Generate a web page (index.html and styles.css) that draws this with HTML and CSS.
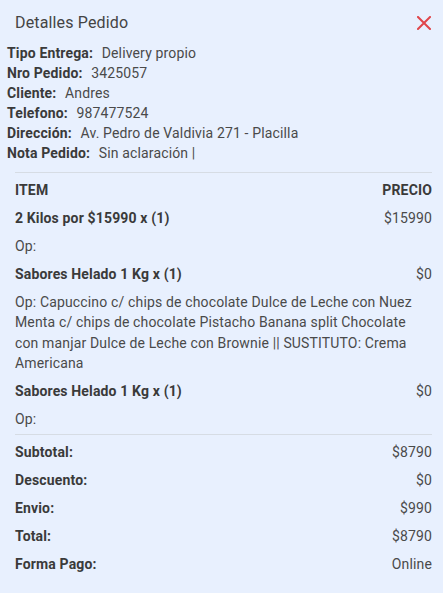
FILE: index.html
```html
<!DOCTYPE html>
<html lang="es">
<head>
<meta charset="utf-8">
<title>Detalles Pedido</title>
<link rel="stylesheet" href="styles.css">
</head>
<body>
<div class="panel">
  <div class="header">
    <h1 class="title">Detalles Pedido</h1>
    <button class="close" aria-label="Cerrar">
      <svg width="14" height="14" viewBox="0 0 14 14"><path d="M1 1 L13 13 M13 1 L1 13" stroke="#e0464b" stroke-width="2" fill="none" stroke-linecap="square"/></svg>
    </button>
  </div>
  <div class="info">
    <div class="info-row"><span class="lbl">Tipo Entrega:</span> <span class="val">Delivery propio</span></div>
    <div class="info-row"><span class="lbl">Nro Pedido:</span> <span class="val">3425057</span></div>
    <div class="info-row"><span class="lbl">Cliente:</span> <span class="val">Andres</span></div>
    <div class="info-row"><span class="lbl">Telefono:</span> <span class="val">987477524</span></div>
    <div class="info-row"><span class="lbl">Dirección:</span> <span class="val">Av. Pedro de Valdivia 271 - Placilla</span></div>
    <div class="info-row"><span class="lbl">Nota Pedido:</span> <span class="val">Sin aclaración |</span></div>
  </div>
  <hr class="divider">
  <div class="items">
    <div class="row head"><span class="b">ITEM</span><span class="b">PRECIO</span></div>
    <div class="row"><span class="b">2 Kilos por $15990 x (1)</span><span class="v">$15990</span></div>
    <div class="row"><span class="v">Op:</span></div>
    <div class="row"><span class="b">Sabores Helado 1 Kg x (1)</span><span class="v">$0</span></div>
    <div class="desc">Op: Capuccino c/ chips de chocolate Dulce de Leche con Nuez Menta c/ chips de chocolate Pistacho Banana split Chocolate con manjar Dulce de Leche con Brownie || SUSTITUTO: Crema Americana</div>
    <div class="row"><span class="b">Sabores Helado 1 Kg x (1)</span><span class="v">$0</span></div>
    <div class="row"><span class="v">Op:</span></div>
  </div>
  <hr class="divider second">
  <div class="items">
    <div class="row"><span class="b">Subtotal:</span><span class="v">$8790</span></div>
    <div class="row"><span class="b">Descuento:</span><span class="v">$0</span></div>
    <div class="row"><span class="b">Envio:</span><span class="v">$990</span></div>
    <div class="row"><span class="b">Total:</span><span class="v">$8790</span></div>
    <div class="row"><span class="b">Forma Pago:</span><span class="v">Online</span></div>
  </div>
</div>
</body>
</html>
```
FILE: styles.css
```css
* { box-sizing: border-box; }
html, body {
  margin: 0;
  padding: 0;
  background: #e8f0fe;
  font-family: Roboto, "Liberation Sans", sans-serif;
  font-size: 14px;
  letter-spacing: 0.15px;
  color: #4a4a4a;
}
.panel {
  padding: 8px 11px 0 7px;
}
.header {
  display: flex;
  justify-content: space-between;
  align-items: center;
  height: 30px;
  padding-left: 8px;
  margin-bottom: 5px;
}
.title {
  margin: 0;
  font-size: 16px;
  font-weight: 400;
  color: #444;
  line-height: 30px;
}
.close {
  border: 0;
  background: transparent;
  padding: 0;
  width: 14px;
  height: 14px;
  margin-right: 1px;
  display: flex;
}
.info-row {
  line-height: 20px;
  height: 20px;
  white-space: nowrap;
}
.lbl {
  font-weight: 700;
  color: #3a3a3a;
}
.val {
  color: #4a4a4a;
  margin-left: 5px;
}
.divider {
  border: 0;
  border-top: 1px solid #d6dce4;
  margin: 9px 0 3px 8px;
}
.divider.second {
  margin-top: 1px;
}
.items {
  padding-left: 8px;
}
.row {
  display: flex;
  justify-content: space-between;
  align-items: center;
  height: 28px;
  line-height: 20px;
}
.b {
  font-weight: 700;
  color: #3a3a3a;
}
.v {
  color: #4a4a4a;
}
.desc {
  padding: 4px 0;
  line-height: 20.3px;
  color: #4a4a4a;
}
```
